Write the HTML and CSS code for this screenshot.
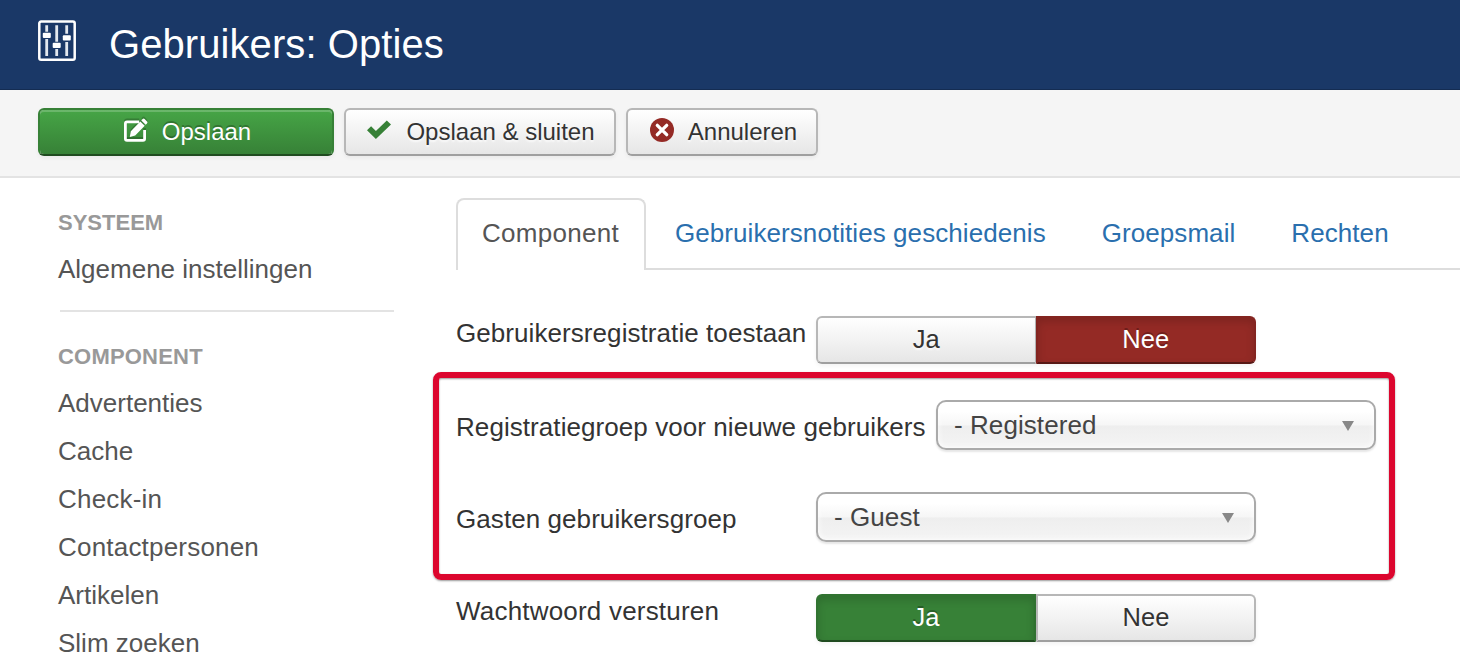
FILE: index.html
```html
<!DOCTYPE html>
<html lang="nl">
<head>
<meta charset="utf-8">
<title>Gebruikers: Opties</title>
<link rel="stylesheet" href="styles.css">
</head>
<body>
<header class="header">
  <svg class="header-icon" width="38" height="41" viewBox="0 0 38 41">
    <rect x="1.3" y="1.5" width="35.4" height="38.2" rx="1.8" fill="none" stroke="#fff" stroke-width="2.5"/>
    <path d="M8.7 5.2v6.6M8.7 19v17M18.7 5.2v16.6M18.7 29v7M28.7 5.2v8.6M28.7 22v14" stroke="#e3e8ee" stroke-width="2.8"/>
    <g fill="#fff"><rect x="4.8" y="12.7" width="8" height="5.2" rx="1"/><rect x="14.7" y="22.8" width="8" height="5.2" rx="1"/><rect x="24.8" y="15.2" width="8" height="5.4" rx="1"/></g>
  </svg>
  <h1 class="page-title">Gebruikers: Opties</h1>
</header>
<div class="toolbar">
  <button class="btn btn-save">
    <svg class="icon" width="24" height="26" viewBox="0 0 24 26">
      <path d="M15.2 4.9H3q-1.6 0-1.6 1.6v15.2q0 1.6 1.6 1.6h16q1.6 0 1.6-1.6V13" fill="none" stroke="#fff" stroke-width="2.8"/>
      <path d="M5.8 20l1-5.8L16.3 4.4l4.4 4.3-9.5 9.9zM17.3 3.4l1.3-1.3q1-1 2 0l2.4 2.4q1 1 0 2l-1.3 1.3z" fill="#fff"/>
    </svg>
    <span>Opslaan</span>
  </button>
  <button class="btn btn-close">
    <svg class="icon" width="24" height="20" viewBox="0 0 24 20"><path d="M0 10.3L4.1 6.2 8.9 11 19.8.5 24 4.4 8.9 19z" fill="#378137"/></svg>
    <span>Opslaan &amp; sluiten</span>
  </button>
  <button class="btn btn-cancel">
    <svg class="icon" width="24" height="24" viewBox="0 0 24 24"><circle cx="12" cy="12" r="12" fill="#942a25"/><path d="M7.3 7.3l9.4 9.4M16.7 7.3l-9.4 9.4" stroke="#fff" stroke-width="3.3" stroke-linecap="round"/></svg>
    <span>Annuleren</span>
  </button>
</div>
<div class="main">
  <nav class="sidebar">
    <h2 class="nav-header">Systeem</h2>
    <a class="nav-item">Algemene instellingen</a>
    <div class="divider"></div>
    <h2 class="nav-header nav-header-wide">Component</h2>
    <a class="nav-item">Advertenties</a>
    <a class="nav-item">Cache</a>
    <a class="nav-item nav-item-wide">Check-in</a>
    <a class="nav-item nav-item-wide">Contactpersonen</a>
    <a class="nav-item">Artikelen</a>
    <a class="nav-item">Slim zoeken</a>
  </nav>
  <section class="content">
    <div class="tabs">
      <a class="tab tab-active">Component</a>
      <div class="tab-rest">
        <a class="tab">Gebruikersnotities geschiedenis</a>
        <a class="tab">Groepsmail</a>
        <a class="tab">Rechten</a>
      </div>
    </div>
    <div class="row row-first">
      <label class="label">Gebruikersregistratie toestaan</label>
      <div class="switch"><button class="btn">Ja</button><button class="btn on-no">Nee</button></div>
    </div>
    <div class="highlight">
      <div class="row row-select">
        <label class="label label-long">Registratiegroep voor nieuwe gebruikers</label>
        <div class="select"><span>- Registered</span><i class="caret"></i></div>
      </div>
      <div class="row row-select">
        <label class="label">Gasten gebruikersgroep</label>
        <div class="select"><span>- Guest</span><i class="caret"></i></div>
      </div>
    </div>
    <div class="row row-last">
      <label class="label label-wide">Wachtwoord versturen</label>
      <div class="switch"><button class="btn on-yes">Ja</button><button class="btn">Nee</button></div>
    </div>
  </section>
</div>
</body>
</html>
```
FILE: styles.css
```css
* { box-sizing: border-box; }
body {
  margin: 0;
  height: 660px;
  overflow: hidden;
  background: #fff;
  color: #333;
  font: 26px/36px "Liberation Sans", Arial, sans-serif;
  letter-spacing: .07px;
}
.header {
  display: flex;
  align-items: flex-start;
  height: 90px;
  padding: 20px 38px 0;
  background: #1a3867;
  border-bottom: 1px solid #142c52;
  color: #fff;
}
.page-title {
  margin: 0 0 0 33px;
  font-size: 40px;
  line-height: 48px;
  font-weight: normal;
  letter-spacing: .08px;
}
.toolbar {
  display: flex;
  gap: 10px;
  height: 88px;
  padding: 18px 38px 0;
  background: #f5f5f5;
  border-bottom: 2px solid #e3e3e3;
}
.btn {
  display: flex;
  align-items: center;
  justify-content: center;
  height: 48px;
  padding: 0;
  border: 2px solid #b7b7b7;
  border-bottom-color: #9f9f9f;
  border-radius: 6px;
  background: linear-gradient(#fff, #e6e6e6) padding-box;
  box-shadow: inset 0 2px 0 rgba(255, 255, 255, .2), 0 2px 4px rgba(0, 0, 0, .05);
  color: #333;
  font: 24px/36px "Liberation Sans", Arial, sans-serif;
  letter-spacing: 0;
  text-shadow: 0 2px 2px rgba(255, 255, 255, .75);
}
.icon { flex: none; margin-bottom: 4px; overflow: visible; }
.btn-save {
  width: 296px;
  gap: 14px;
  padding-left: 3px;
  border-color: #378137 #378137 #204b20;
  background: linear-gradient(#46a546, #378137) padding-box;
  box-shadow: inset 0 2px 0 rgba(255, 255, 255, .2), 0 2px 4px rgba(0, 0, 0, .05);
  color: #fff;
  text-shadow: 0 -2px 0 rgba(0, 0, 0, .25);
}
.btn-save .icon { filter: drop-shadow(0 -2px 0 rgba(0, 0, 0, .2)); }
.btn-close { width: 272px; gap: 15px; padding-left: 2px; }
.btn-cancel { width: 192px; gap: 14px; padding-left: 3px; }
.main { display: flex; align-items: flex-start; height: 482px; }
.sidebar { flex: none; width: 456px; padding: 27px 62px 0 58px; color: #555; }
.nav-header {
  margin: 0 0 4px;
  color: #999;
  font-size: 22px;
  line-height: 36px;
  letter-spacing: 0;
  text-transform: uppercase;
}
.nav-header-wide { letter-spacing: .2px; }
.nav-item { display: block; line-height: 48px; letter-spacing: 0; }
.nav-item-wide { letter-spacing: .2px; }
.divider { height: 2px; margin: 17px 0 27px 2px; background: #e3e3e3; }
.content { flex: 1; min-width: 0; padding-top: 20px; }
.tabs { display: flex; height: 72px; }
.tab { white-space: nowrap; color: #2a6fae; }
.tab-active {
  flex: none;
  width: 190px;
  padding: 15px 0 0 24px;
  border: 2px solid #ddd;
  border-bottom: 0;
  border-radius: 8px 8px 0 0;
  color: #555;
  letter-spacing: .3px;
}
.tab-rest {
  display: flex;
  flex: 1;
  gap: 56px;
  padding: 17px 0 0 29px;
  border-bottom: 2px solid #ddd;
}
.row { display: flex; align-items: flex-start; }
.row-first { padding-top: 46px; }
.row-last { padding-top: 14px; }
.label { flex: none; width: 360px; margin-top: -1px; white-space: nowrap; }
.label-long { width: 480px; }
.label-wide { letter-spacing: .2px; }
.switch { display: flex; width: 440px; }
.switch .btn { flex: 1; padding-bottom: 2px; font-size: 25.5px; }
.switch .btn:first-child { border-radius: 6px 0 0 6px; }
.switch .btn:last-child { border-left-width: 2px; border-radius: 0 6px 6px 0; }
.switch .on-no,
.switch .on-yes {
  color: #fff;
  box-shadow: inset 0 4px 8px rgba(0, 0, 0, .15), 0 2px 4px rgba(0, 0, 0, .05);
  text-shadow: 0 -2px 0 rgba(0, 0, 0, .25);
}
.switch .on-no { border-color: #832420 #832420 #571815; background: #942a25; }
.switch .on-yes { border-color: #317331 #317331 #204b20; background: #378137; }
.switch .btn:first-child:not(.on-yes) { border-right-width: 1px; }
.highlight {
  display: grid;
  align-content: start;
  gap: 42px;
  width: 962px;
  height: 208px;
  margin: 8px 0 0 -23px;
  padding: 22px 0 0 17px;
  border: 6px solid #dc062e;
  border-radius: 8px;
  box-shadow: 0 1px 2px rgba(0, 0, 0, .4), inset 0 1px 2px rgba(0, 0, 0, .4);
}
.row-select .label { margin-top: 9px; }
.select {
  display: flex;
  align-items: center;
  justify-content: space-between;
  width: 440px;
  height: 50px;
  padding: 0 20px 0 16px;
  border: 2px solid #aaa;
  border-radius: 10px;
  background: linear-gradient(#fff 20%, #f6f6f6 50%, #eee 52%, #f4f4f4 100%) padding-box;
  box-shadow: inset 0 0 6px #fff, 0 2px 2px rgba(0, 0, 0, .1);
  color: #444;
  line-height: 46px;
}
.caret {
  width: 12px;
  height: 10px;
  margin-top: 2px;
  background: #888;
  clip-path: polygon(0 0, 100% 0, 50% 100%);
}
```
